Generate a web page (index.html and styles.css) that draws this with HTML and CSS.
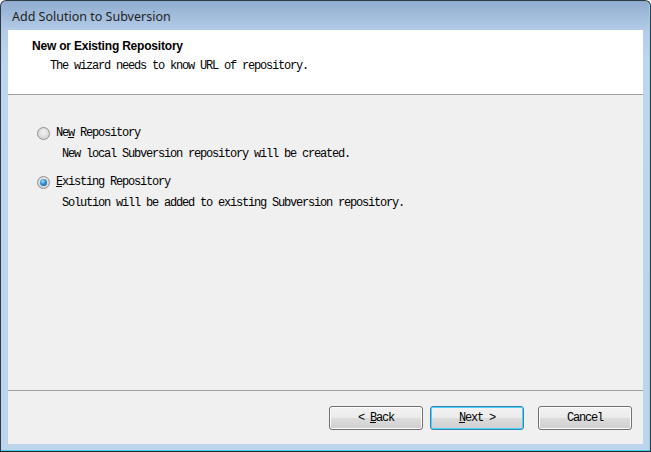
FILE: index.html
```html
<!DOCTYPE html>
<html>
<head>
<meta charset="utf-8">
<link rel="stylesheet" href="styles.css">
</head>
<body>
<div class="window">
  <div class="titlebar">Add Solution to Subversion</div>
  <div class="client">
    <div class="header">
      <div class="header-title">New or Existing Repository</div>
      <div class="header-sub mono">The wizard needs to know URL of repository.</div>
    </div>
    <div class="content">
      <div class="option">
        <div class="radio-row">
          <span class="radio"></span>
          <span class="mono">Ne<u>w</u> Repository</span>
        </div>
        <div class="desc mono">New local Subversion repository will be created.</div>
      </div>
      <div class="option">
        <div class="radio-row">
          <span class="radio checked"></span>
          <span class="mono"><u>E</u>xisting Repository</span>
        </div>
        <div class="desc mono">Solution will be added to existing Subversion repository.</div>
      </div>
    </div>
    <div class="footer">
      <button class="btn mono">&lt; <u>B</u>ack</button>
      <button class="btn btn-default mono"><u>N</u>ext &gt;</button>
      <button class="btn btn-cancel mono">Cancel</button>
    </div>
  </div>
</div>
</body>
</html>
```

FILE: styles.css
```css
html, body {
  margin: 0;
  padding: 0;
  background: #ffffff;
}
.window {
  box-sizing: border-box;
  width: 651px;
  height: 452px;
  border: 1px solid #2f3a46;
  border-bottom-color: #1f2a33;
  border-radius: 6px 6px 0 0;
  background: linear-gradient(to bottom, #90accf 0px, #b4cce8 30px, #bed5ee 60px, #bcd4ec 100%);
  display: flex;
  flex-direction: column;
  box-shadow: inset 0 -1px 0 #3fd0e6, inset -1px 0 0 #8fd6ea;
}
.titlebar {
  height: 29px;
  flex: none;
  box-sizing: border-box;
  padding: 8px 0 0 11px;
  font-family: "Noto Sans", "Open Sans", sans-serif;
  font-size: 12.5px;
  line-height: 16px;
  color: #1e1e1e;
}
.client {
  flex: 1;
  margin: 0 7px 7px 7px;
  background: #f0f0f0;
  display: flex;
  flex-direction: column;
}
.mono {
  font-family: "Liberation Mono", "DejaVu Sans Mono", monospace;
  font-size: 12px;
  letter-spacing: -1.2px;
  color: #000;
}
.header {
  height: 65px;
  flex: none;
  box-sizing: border-box;
  background: #ffffff;
  border-bottom: 1px solid #a0a0a0;
  padding: 9px 0 0 24px;
}
.header-title {
  font-family: "Liberation Sans", Arial, sans-serif;
  font-weight: bold;
  font-size: 12px;
  line-height: 14px;
  color: #000;
  letter-spacing: -0.2px;
}
.header-sub {
  margin: 6px 0 0 18px;
  line-height: 14px;
}
.content {
  flex: 1;
  padding: 32px 0 0 29px;
  display: flex;
  flex-direction: column;
  gap: 15px;
}
.option {
  display: flex;
  flex-direction: column;
}
.radio-row {
  display: flex;
  align-items: center;
  gap: 6px;
  height: 13px;
  line-height: 13px;
}
.desc {
  margin: 7px 0 0 25px;
  line-height: 14px;
}
.radio {
  width: 13px;
  height: 13px;
  box-sizing: border-box;
  border-radius: 50%;
  border: 1px solid #8e8f8f;
  background: radial-gradient(circle at 50% 40%, #f4f4f4 0%, #dcdcdc 55%, #cfcfcf 100%);
  position: relative;
  flex: none;
}
.radio.checked::after {
  content: "";
  position: absolute;
  left: 2px;
  top: 2px;
  width: 7px;
  height: 7px;
  border-radius: 50%;
  background: radial-gradient(circle at 40% 35%, #9ae0fb 0%, #2f8fcf 45%, #0e4f86 100%);
}
.footer {
  height: 54px;
  flex: none;
  box-sizing: border-box;
  border-top: 1px solid #a0a0a0;
  display: flex;
  justify-content: flex-end;
  align-items: flex-start;
  padding: 15px 11px 0 0;
}
.btn {
  width: 94px;
  height: 24px;
  box-sizing: border-box;
  border: 1px solid #707070;
  border-radius: 3px;
  background: linear-gradient(to bottom, #f2f2f2 0%, #ebebeb 50%, #dddddd 51%, #cfcfcf 100%);
  box-shadow: inset 0 0 0 1px #fcfcfc;
  padding: 0;
  margin: 0;
  line-height: 20px;
  text-align: center;
}
.btn + .btn {
  margin-left: 7px;
}
.btn-default {
  border-color: #3c7fb1;
  box-shadow: inset 0 0 0 1px #48d7fb;
}
.btn-default + .btn-cancel {
  margin-left: 14px;
}
```
